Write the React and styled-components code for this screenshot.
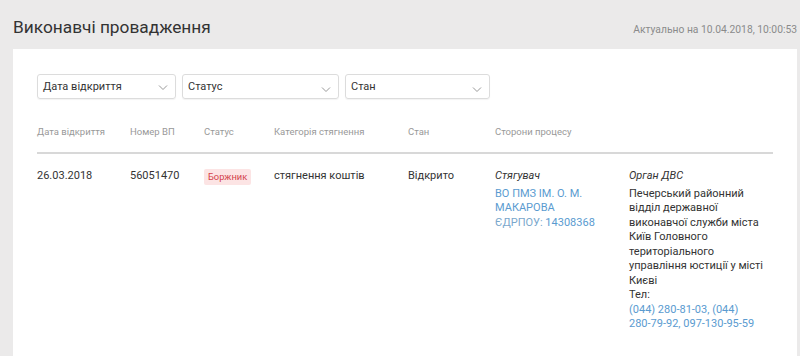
import styled, { createGlobalStyle } from "styled-components";

const GlobalStyle = createGlobalStyle`
  body {
    margin: 0;
    background: #ebeaea;
    font-family: Roboto, "Liberation Sans", sans-serif;
    color: #333;
  }
`;

const Page = styled.div`
  padding: 0 3px 0 13px;
`;

const TopBar = styled.div`
  display: flex;
  justify-content: space-between;
  align-items: flex-end;
  height: 49px;
  padding-bottom: 11px;
  box-sizing: border-box;
`;

const Title = styled.h1`
  margin: 0;
  font-size: 17.3px;
  font-weight: 400;
  color: #333;
  line-height: 22px;
`;

const Updated = styled.span`
  font-size: 10.3px;
  color: #8a8a8a;
  margin-bottom: 2px;
`;

const Card = styled.div`
  background: #fff;
  padding: 25px 24px 40px;
  min-height: 300px;
`;

const Filters = styled.div`
  display: flex;
  gap: 6px;
`;

const Select = styled.div`
  width: ${(p) => p.w}px;
  height: 25px;
  box-sizing: border-box;
  border: 1px solid #dcdcdc;
  border-radius: 3px;
  box-shadow: 0 1px 1px rgba(0, 0, 0, 0.05);
  display: flex;
  align-items: center;
  justify-content: space-between;
  padding: 0 6px 0 5px;
  font-size: 11px;
  color: #333;
`;

const Chevron = styled.svg`
  width: 12px;
  height: 12px;
  margin-top: ${(p) => p.dy || 0}px;
`;

const Grid = styled.div`
  display: grid;
  grid-template-columns: 93px 74px 70px 134px 87px 134px 1fr;
  margin-top: 27px;
`;

const Head = styled.div`
  font-size: 9.5px;
  color: #999;
  padding-bottom: 15px;
  border-bottom: 2px solid #d8d8d8;
`;

const Cell = styled.div`
  font-size: 11px;
  line-height: 14.5px;
  padding-top: 15px;
  color: #333;
`;

const Badge = styled.span`
  display: inline-block;
  background: #fce4e4;
  color: #d3414a;
  font-size: 9.3px;
  line-height: 16px;
  padding: 0 4px;
  border-radius: 2px;
`;

const Role = styled.div`
  font-style: italic;
  margin-bottom: 3px;
`;

const Link = styled.span`
  color: #5a9bd0;
`;

const Phone = styled(Link)`
  white-space: nowrap;
`;

const Label = styled.span`
  color: #7aa7cc;
`;

const Tail = styled.div`
  padding-right: 4px;
`;

function ChevronIcon({ dy }) {
  return (
    <Chevron dy={dy} viewBox="0 0 12 12" fill="none" stroke="#999" strokeWidth="1">
      <path d="M2 4.5l4 4 4-4" />
    </Chevron>
  );
}

const phones = ["(044) 280-81-03,", "(044) 280-79-92,", "097-130-95-59"];

export default function App() {
  return (
    <>
      <GlobalStyle />
      <Page>
        <TopBar>
          <Title>Виконавчі провадження</Title>
          <Updated>Актуально на 10.04.2018, 10:00:53</Updated>
        </TopBar>
        <Card>
          <Filters>
            <Select w={139}>
              <span>Дата відкриття</span>
              <ChevronIcon />
            </Select>
            <Select w={157}>
              <span>Статус</span>
              <ChevronIcon dy={4} />
            </Select>
            <Select w={145}>
              <span>Стан</span>
              <ChevronIcon dy={4} />
            </Select>
          </Filters>
          <Grid>
            <Head>Дата відкриття</Head>
            <Head>Номер ВП</Head>
            <Head>Статус</Head>
            <Head>Категорія стягнення</Head>
            <Head>Стан</Head>
            <Head>Сторони процесу</Head>
            <Head />
            <Cell>26.03.2018</Cell>
            <Cell>56051470</Cell>
            <Cell>
              <Badge>Боржник</Badge>
            </Cell>
            <Cell>стягнення коштів</Cell>
            <Cell>Відкрито</Cell>
            <Cell>
              <Role>Стягувач</Role>
              <Link>ВО ПМЗ ІМ. О. М. МАКАРОВА</Link>
              <br />
              <Label>ЄДРПОУ: </Label>
              <Link>14308368</Link>
            </Cell>
            <Tail as={Cell}>
              <Role>Орган ДВС</Role>
              Печерський районний відділ державної виконавчої служби міста Київ
              Головного територіального управління юстиції у місті Києві
              <br />
              Тел:
              <br />
              <Phone>(044) 280-81-03,</Phone> <Link>(044)</Link>{" "}
              <Phone>280-79-92,</Phone> <Phone>097-130-95-59</Phone>
            </Tail>
          </Grid>
        </Card>
      </Page>
    </>
  );
}
